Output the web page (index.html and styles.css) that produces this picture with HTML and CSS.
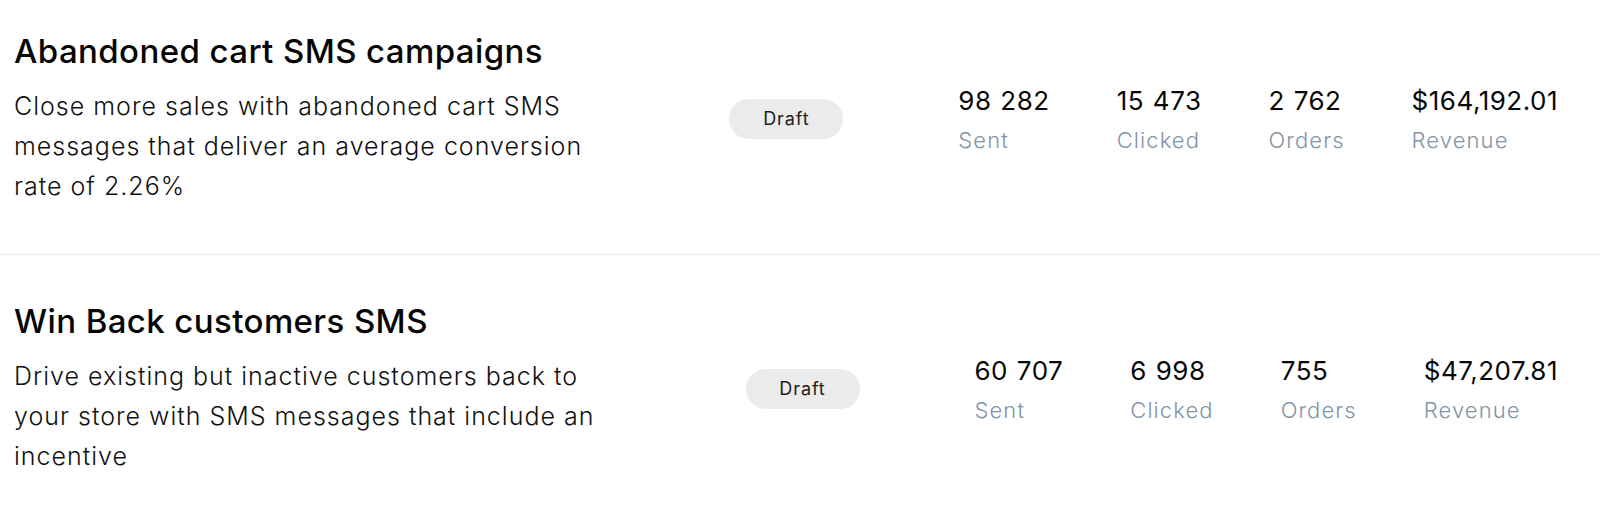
FILE: index.html
```html
<!DOCTYPE html>
<html lang="en">
<head>
<meta charset="utf-8">
<title>SMS campaigns</title>
<link rel="stylesheet" href="styles.css">
</head>
<body>
<div class="list">
  <div class="row row--first">
    <div class="info">
      <h2 class="title">Abandoned cart SMS campaigns</h2>
      <p class="desc">Close more sales with abandoned cart SMS messages that deliver an average conversion rate of 2.26%</p>
    </div>
    <div class="side">
      <span class="pill">Draft</span>
      <div class="stats">
        <div class="stat"><div class="value">98 282</div><div class="label">Sent</div></div>
        <div class="stat"><div class="value">15 473</div><div class="label">Clicked</div></div>
        <div class="stat"><div class="value">2 762</div><div class="label">Orders</div></div>
        <div class="stat"><div class="value">$164,192.01</div><div class="label">Revenue</div></div>
      </div>
    </div>
  </div>
  <div class="row">
    <div class="info">
      <h2 class="title">Win Back customers SMS</h2>
      <p class="desc">Drive existing but inactive customers back to your store with SMS messages that include an incentive</p>
    </div>
    <div class="side">
      <span class="pill">Draft</span>
      <div class="stats">
        <div class="stat"><div class="value">60 707</div><div class="label">Sent</div></div>
        <div class="stat"><div class="value">6 998</div><div class="label">Clicked</div></div>
        <div class="stat"><div class="value">755</div><div class="label">Orders</div></div>
        <div class="stat"><div class="value">$47,207.81</div><div class="label">Revenue</div></div>
      </div>
    </div>
  </div>
</div>
</body>
</html>
```
FILE: styles.css
```css
html, body {
  margin: 0;
  padding: 0;
  background: #ffffff;
}
body {
  font-family: Inter, "Noto Sans", sans-serif;
  color: #0b0b0b;
  overflow: hidden;
}
.list {
  display: flex;
  flex-direction: column;
}
.row {
  display: flex;
  align-items: center;
  justify-content: space-between;
  padding: 46px 42px 48px 14px;
  border-bottom: 1px solid #e4eae8;
}
.row--first {
  padding-top: 31px;
}
.info {
  max-width: 612px;
}
.title {
  margin: 0 0 15px;
  font-size: 33px;
  line-height: 40px;
  font-weight: 500;
  letter-spacing: 0.4px;
  color: #050505;
}
.desc {
  margin: 0;
  font-size: 25px;
  line-height: 40px;
  font-weight: 300;
  letter-spacing: 1px;
  color: #111111;
}
.side {
  display: flex;
  align-items: center;
  gap: 115px;
}
.pill {
  display: inline-flex;
  align-items: center;
  justify-content: center;
  width: 114px;
  height: 40px;
  border-radius: 20px;
  background: #ebebeb;
  font-size: 18px;
  font-weight: 400;
  letter-spacing: 0.9px;
  color: #1c1c1c;
}
.stats {
  display: flex;
  gap: 67px;
}
.stat {
  display: flex;
  flex-direction: column;
  gap: 6px;
}
.value {
  font-size: 26px;
  line-height: 36px;
  font-weight: 400;
  letter-spacing: 0.5px;
  word-spacing: 1px;
  color: #080808;
}
.label {
  font-size: 22px;
  line-height: 30px;
  font-weight: 300;
  letter-spacing: 1.1px;
  color: #8294a8;
}
```
